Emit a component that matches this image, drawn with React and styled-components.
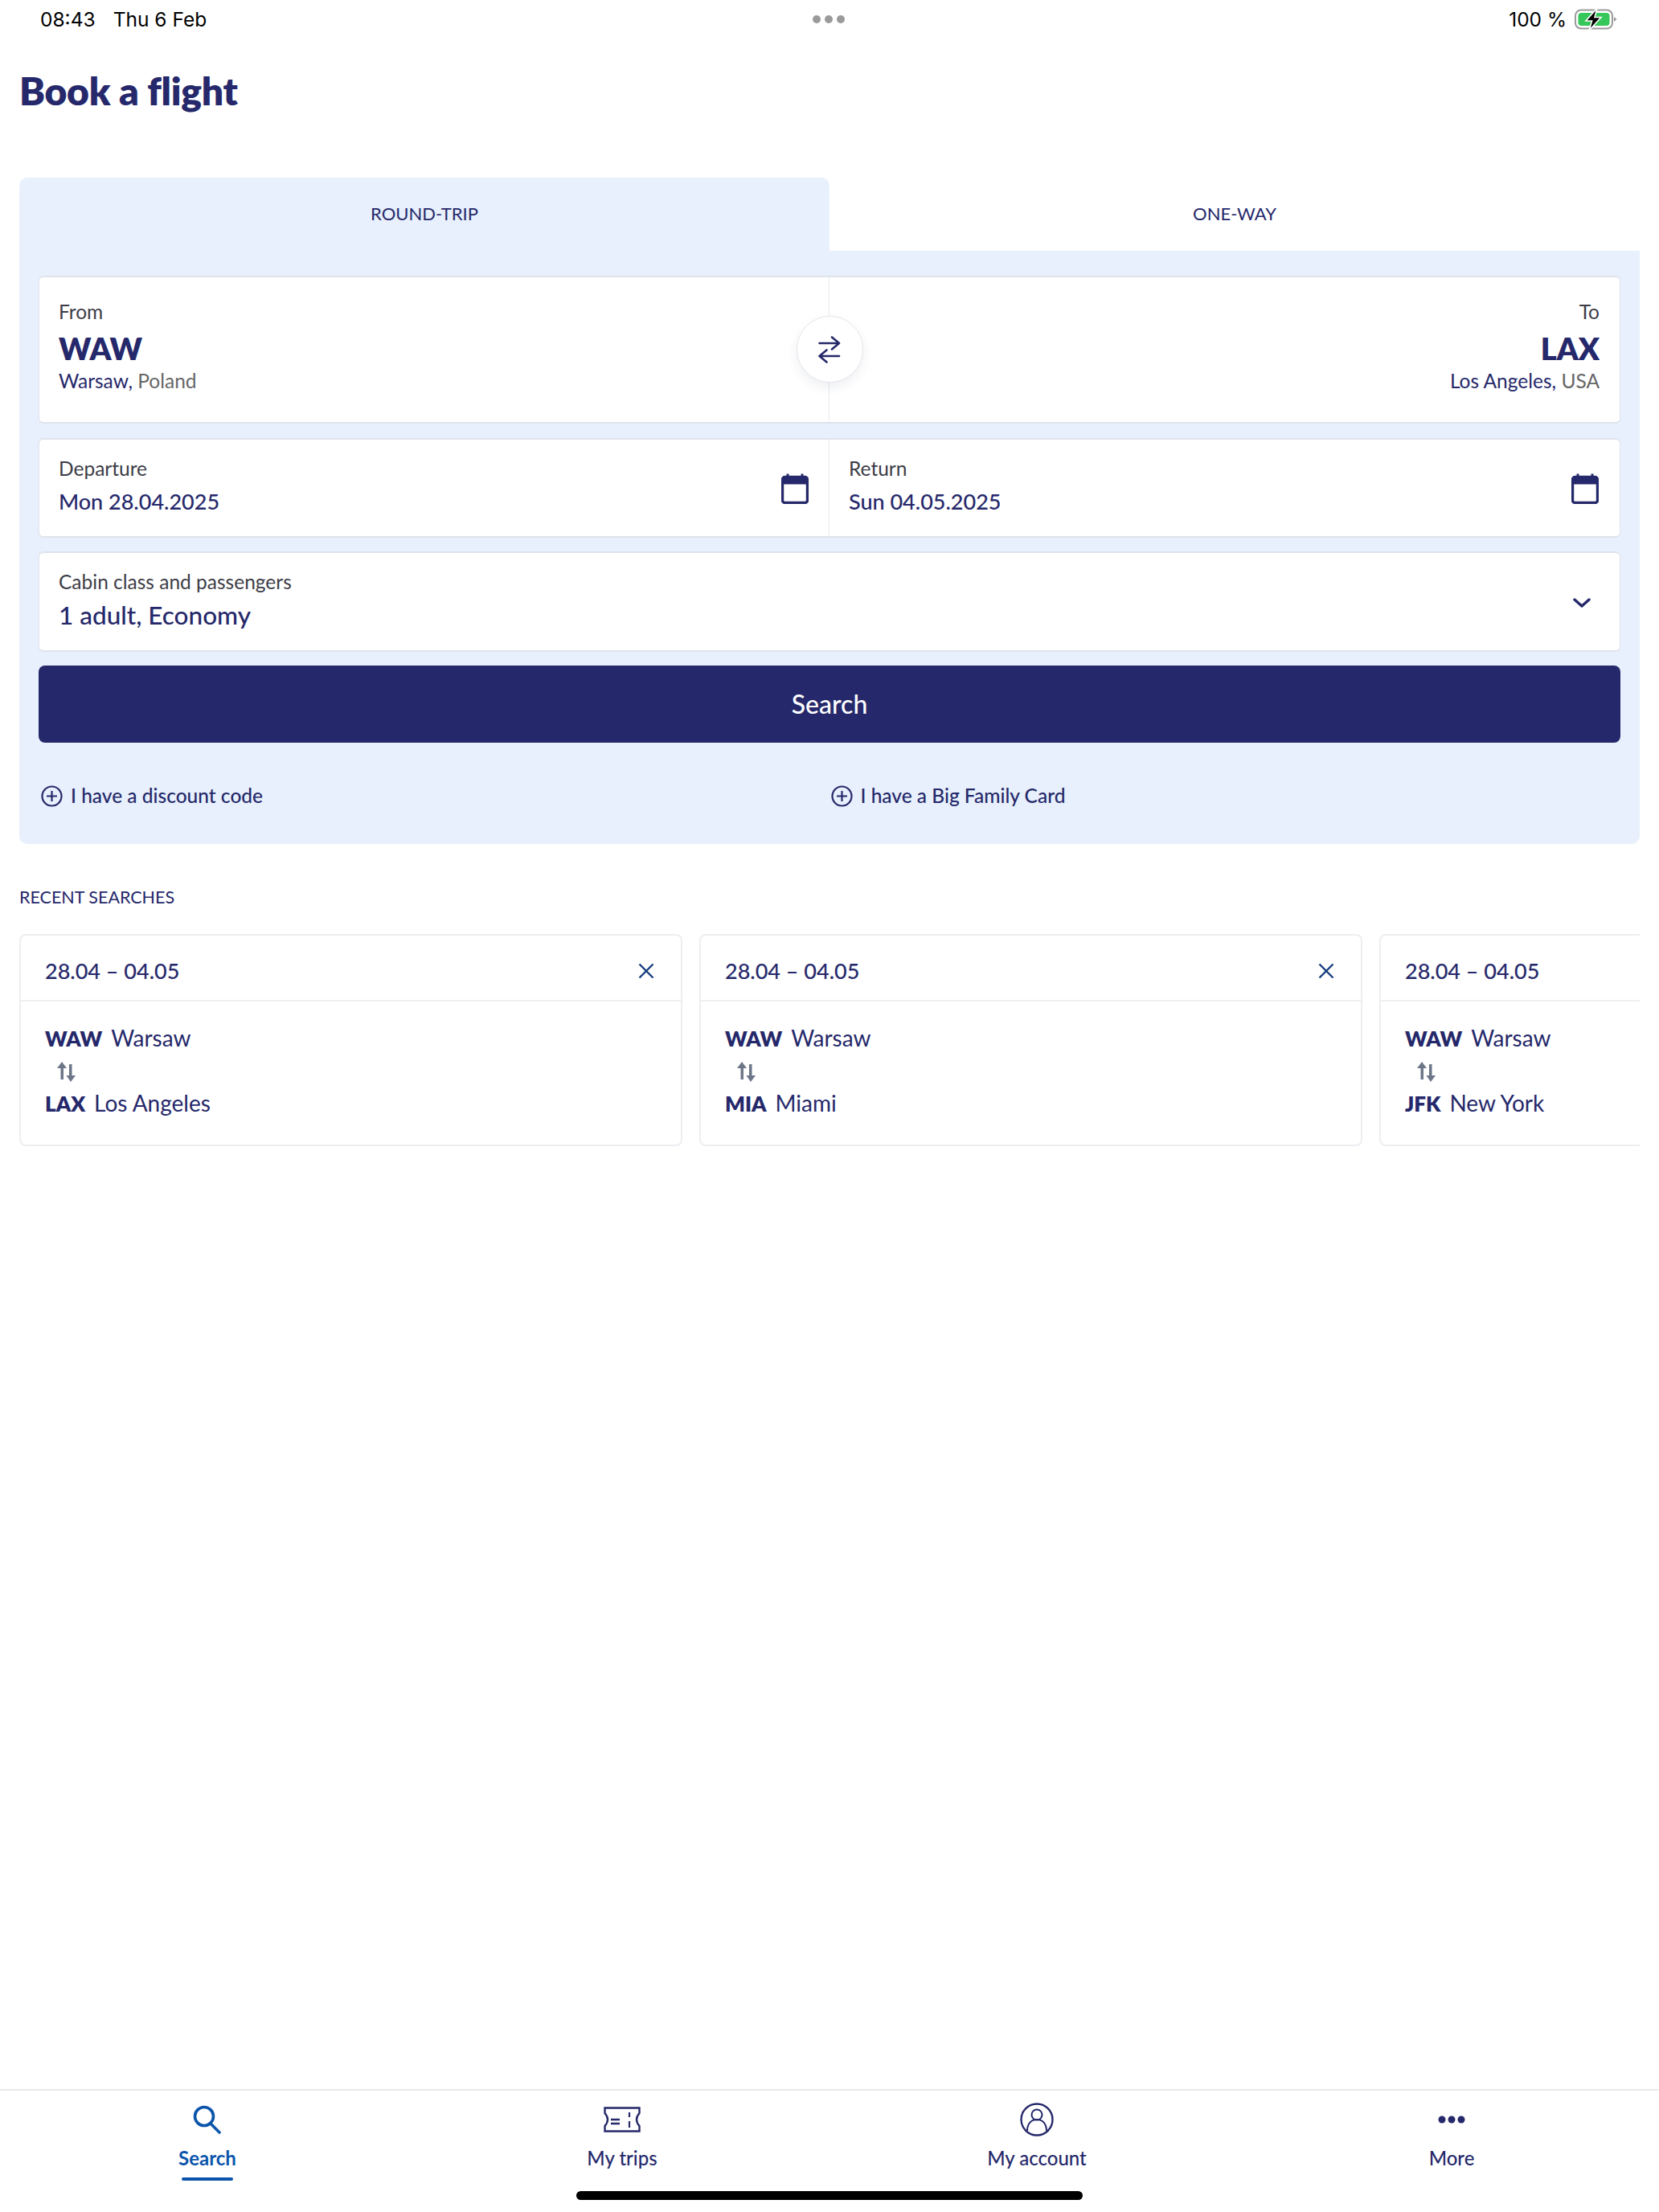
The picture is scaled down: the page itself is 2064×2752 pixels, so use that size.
import React from "react";
import styled, { createGlobalStyle } from "styled-components";

const NAVY = "#25286A";
const BLUE = "#0B55AB";
const PANEL = "#E7F0FC";

const Global = createGlobalStyle`
  html, body { margin: 0; padding: 0; background: #fff; }
  * { box-sizing: border-box; }
  #root { height: 2752px; }
`;

const Page = styled.div`
  height: 2752px;
  display: flex;
  flex-direction: column;
  font-family: "Lato", "Liberation Sans", sans-serif;
  color: ${NAVY};
  overflow: hidden;
`;
const StatusBar = styled.div`
  height: 48px;
  padding: 0 52px 0 50px;
  display: grid;
  grid-template-columns: 1fr auto 1fr;
  align-items: center;
  font-family: "Inter", "Liberation Sans", sans-serif;
  font-size: 24.5px;
  color: #000;
`;
const StatusLeft = styled.div`
  display: flex;
  gap: 22px;
`;
const StatusRight = styled.div`
  display: flex;
  justify-content: flex-end;
  align-items: center;
  gap: 10px;
`;
const Dots = styled.div`
  display: flex;
  gap: 5px;
`;
const Dot = styled.span`
  width: 10px;
  height: 10px;
  border-radius: 50%;
  background: #9a9a9a;
`;
const Main = styled.main`
  flex: 1;
  min-height: 0;
`;
const Title = styled.h1`
  margin: 0;
  height: 173px;
  padding: 35px 24px 0;
  font-size: 48px;
  line-height: 60px;
  font-weight: 800;
  letter-spacing: -0.3px;
`;
const Booking = styled.section`
  margin: 0 24px;
`;
const Tabs = styled.div`
  display: grid;
  grid-template-columns: 1fr 1fr;
  height: 91px;
`;
const Tab = styled.div`
  display: flex;
  align-items: center;
  justify-content: center;
  font-size: 22px;
  background: ${(p) => (p.$active ? PANEL : "#fff")};
  border-radius: 10px 10px 0 0;
  padding-bottom: 2px;
`;
const Panel = styled.div`
  background: ${PANEL};
  border-radius: 0 0 10px 10px;
  height: 738px;
  padding: 31px 24px 0;
  display: flex;
  flex-direction: column;
`;
const Card = styled.div`
  background: #fff;
  border: 1px solid #DFE3EB;
  border-top-width: 2px;
  border-bottom-width: 2px;
  border-radius: 6px;
  height: ${(p) => p.$h}px;
  margin-bottom: ${(p) => p.$mb}px;
  display: grid;
  grid-template-columns: ${(p) => (p.$split ? "1fr 1fr" : "1fr")};
  position: relative;
`;
const Airport = styled.div`
  padding: 25px 25px 0 24px;
  text-align: ${(p) => (p.$right ? "right" : "left")};
  ${(p) => (p.$right ? "" : "border-right: 1px solid #E8EAEE;")}
`;
const Label = styled.div`
  font-size: 24.5px;
  line-height: 36px;
  color: #3c3c46;
`;
const Code = styled.div`
  font-size: 38px;
  line-height: 50px;
  font-weight: 800;
  margin-top: 2px;
`;
const Place = styled.div`
  font-size: 24.5px;
  line-height: 32px;
  font-weight: 400;
`;
const Country = styled.span`
  color: #666;
`;
const SwapButton = styled.div`
  position: absolute;
  left: 50%;
  top: 48px;
  width: 83px;
  height: 83px;
  margin-left: -41.5px;
  border-radius: 50%;
  background: #fff;
  border: 1px solid #E6E7EC;
  box-shadow: 0 6px 14px rgba(40, 50, 90, 0.08);
  display: flex;
  align-items: center;
  justify-content: center;
`;
const Field = styled.div`
  display: flex;
  justify-content: space-between;
  align-items: flex-start;
  padding: 18px 24px 0 24px;
  ${(p) => (p.$divided ? "border-right: 1px solid #E8EAEE;" : "")}
`;
const FieldValue = styled.div`
  font-size: ${(p) => p.$size}px;
  line-height: 40px;
  margin-top: 3px;
  font-weight: 500;
`;
const IconSlot = styled.div`
  margin-top: ${(p) => p.$top}px;
  margin-right: ${(p) => p.$right}px;
  line-height: 0;
`;
const SearchButton = styled.button`
  height: 96px;
  border: none;
  border-radius: 8px;
  background: ${NAVY};
  color: #fff;
  font-family: inherit;
  font-size: 32px;
  font-weight: 500;
  padding: 0 0 2px;
`;
const Extras = styled.div`
  display: grid;
  grid-template-columns: 1fr 1fr;
  margin-top: 50px;
  padding-left: 3px;
`;
const Extra = styled.div`
  display: flex;
  align-items: center;
  gap: 10px;
  font-size: 24.5px;
  font-weight: 500;
  line-height: 32px;
`;
const SectionTitle = styled.h2`
  margin: 50px 24px 0;
  font-size: 21.5px;
  line-height: 32px;
  font-weight: 400;
`;
const CardRow = styled.div`
  margin: 30px 24px 0;
  display: flex;
  gap: 21px;
  overflow: hidden;
`;
const Recent = styled.article`
  flex: 0 0 825px;
  height: 264px;
  border: 2px solid #EDEEF1;
  border-radius: 8px;
`;
const RecentHead = styled.div`
  height: 82px;
  padding: 7px 33px 0 30px;
  border-bottom: 2px solid #EFF0F2;
  display: flex;
  align-items: center;
  justify-content: space-between;
  font-size: 27px;
  font-weight: 500;
`;
const RecentBody = styled.div`
  padding: 27px 30px 0;
  display: flex;
  flex-direction: column;
`;
const RouteLine = styled.div`
  font-size: 28px;
  line-height: 36px;
  font-weight: 400;
`;
const RouteCode = styled.strong`
  font-size: 26px;
  font-weight: 800;
  margin-right: 11px;
`;
const RouteArrows = styled.div`
  height: 44px;
  padding: 11px 0 0 14px;
  line-height: 0;
`;
const Footer = styled.footer`
  flex: none;
`;
const TabBar = styled.nav`
  height: 127px;
  border-top: 2px solid #EAEAEA;
  display: grid;
  grid-template-columns: repeat(4, 1fr);
`;
const TabItem = styled.div`
  display: flex;
  flex-direction: column;
  align-items: center;
  color: ${(p) => (p.$active ? BLUE : NAVY)};
  font-size: 24px;
  font-weight: ${(p) => (p.$active ? 700 : 500)};
`;
const TabIcon = styled.div`
  height: 60px;
  margin-top: 6px;
  display: flex;
  align-items: center;
  justify-content: center;
`;
const TabLabel = styled.div`
  line-height: 30px;
  margin-top: 3px;
`;
const TabMark = styled.div`
  width: 64px;
  height: 4px;
  margin-top: 9px;
  border-radius: 2px;
  background: ${(p) => (p.$active ? BLUE : "transparent")};
`;
const HomeZone = styled.div`
  height: 26px;
  display: flex;
  justify-content: center;
`;
const HomeBar = styled.div`
  width: 630px;
  height: 11px;
  border-radius: 6px;
  background: #000;
`;

const Battery = () => (
  <svg width="53" height="26" viewBox="0 0 53 26">
    <rect x="1" y="1.5" width="46" height="23" rx="7" fill="none" stroke="#9a9a9a" strokeWidth="2" />
    <rect x="4.5" y="5" width="39" height="16" rx="4" fill="#35C759" />
    <path d="M49 10 L52.5 13 L49 16 Z" fill="#9a9a9a" />
    <path d="M28 -1 L14 15 H21.5 L18 27 L33 10.5 H25 Z" fill="#000" stroke="#fff" strokeWidth="1.6" />
  </svg>
);
const SwapIcon = () => (
  <svg width="28" height="34" viewBox="0 0 28 34" fill="none" stroke={NAVY} strokeWidth="2.6" strokeLinecap="round" strokeLinejoin="round">
    <path d="M1.5 9 H26 M17 1.5 L26 9 L17 16.5" />
    <path d="M26 25 H1.5 M10.5 17.5 L1.5 25 L10.5 32.5" />
  </svg>
);
const CalendarIcon = () => (
  <svg width="34" height="38" viewBox="0 0 34 38">
    <path d="M8 0.5 V5 M26 0.5 V5" stroke={NAVY} strokeWidth="3" />
    <rect x="1.5" y="4.5" width="31" height="32" rx="3" fill="none" stroke={NAVY} strokeWidth="3.4" />
    <rect x="1.5" y="4.5" width="31" height="9" fill={NAVY} />
  </svg>
);
const ChevronIcon = () => (
  <svg width="22" height="14" viewBox="0 0 22 14" fill="none" stroke={NAVY} strokeWidth="3.4" strokeLinecap="round" strokeLinejoin="round">
    <path d="M2 3 L11 11 L20 3" />
  </svg>
);
const PlusCircle = () => (
  <svg width="27" height="27" viewBox="0 0 27 27" fill="none" stroke={NAVY} strokeWidth="2.2">
    <circle cx="13.5" cy="13.5" r="12" />
    <path d="M13.5 7 V20 M7 13.5 H20" />
  </svg>
);
const CloseIcon = () => (
  <svg width="20" height="20" viewBox="0 0 20 20" fill="none" stroke="#143C7C" strokeWidth="2.4">
    <path d="M1.5 1.5 L18.5 18.5 M18.5 1.5 L1.5 18.5" />
  </svg>
);
const UpDown = () => (
  <svg width="25" height="25" viewBox="0 0 25 25" fill="#6B7688">
    <path d="M7 0 L13 8 H9 V22 H5.5 V8 H1 Z" />
    <path d="M16 3 H19.5 V17 H24 L18 25 L12.5 17 H16 Z" />
  </svg>
);
const SearchIcon = () => (
  <svg width="36" height="36" viewBox="0 0 36 36" fill="none" stroke={BLUE} strokeWidth="3.6" strokeLinecap="round">
    <circle cx="14" cy="14" r="11.5" />
    <path d="M22 23 L33 34" />
  </svg>
);
const TicketIcon = () => (
  <svg width="46" height="32" viewBox="0 0 46 32" fill="none" stroke={NAVY} strokeWidth="2.4">
    <path d="M1.5 1.5 H44.5 V8 Q41 12 41 16 Q41 20 44.5 24 V30.5 H1.5 V24 Q5 20 5 16 Q5 12 1.5 8 Z" />
    <path d="M9 16 H20 M9 21 H20" strokeWidth="2.6" />
    <path d="M32 7 V13 M32 18 V26" strokeWidth="2.2" />
  </svg>
);
const AccountIcon = () => (
  <svg width="42" height="42" viewBox="0 0 42 42" fill="none" stroke={NAVY} strokeWidth="2.4">
    <circle cx="21" cy="21" r="19.5" />
    <circle cx="21" cy="15" r="6.5" strokeWidth="2" />
    <path d="M9 35 C9 26 14 21 21 21 C28 21 33 26 33 35" strokeWidth="2" />
  </svg>
);
const MoreIcon = () => (
  <svg width="34" height="10" viewBox="0 0 34 10" fill={NAVY}>
    <circle cx="5" cy="5" r="4.5" />
    <circle cx="17" cy="5" r="4.5" />
    <circle cx="29" cy="5" r="4.5" />
  </svg>
);

const searches = [
  { code: "LAX", city: "Los Angeles" },
  { code: "MIA", city: "Miami" },
  { code: "JFK", city: "New York" },
];
const navItems = [
  { label: "Search", icon: <SearchIcon />, active: true },
  { label: "My trips", icon: <TicketIcon /> },
  { label: "My account", icon: <AccountIcon /> },
  { label: "More", icon: <MoreIcon /> },
];

export default function App() {
  return (
    <Page>
      <Global />
      <StatusBar>
        <StatusLeft>
          <span>08:43</span>
          <span>Thu 6 Feb</span>
        </StatusLeft>
        <Dots>
          <Dot />
          <Dot />
          <Dot />
        </Dots>
        <StatusRight>
          <span>100 %</span>
          <Battery />
        </StatusRight>
      </StatusBar>
      <Main>
        <Title>Book a flight</Title>
        <Booking>
          <Tabs>
            <Tab $active>ROUND-TRIP</Tab>
            <Tab>ONE-WAY</Tab>
          </Tabs>
          <Panel>
            <Card $h={184} $mb={18} $split>
              <Airport>
                <Label>From</Label>
                <Code>WAW</Code>
                <Place>
                  Warsaw, <Country>Poland</Country>
                </Place>
              </Airport>
              <Airport $right>
                <Label>To</Label>
                <Code>LAX</Code>
                <Place>
                  Los Angeles, <Country>USA</Country>
                </Place>
              </Airport>
              <SwapButton>
                <SwapIcon />
              </SwapButton>
            </Card>
            <Card $h={124} $mb={17} $split>
              <Field $divided>
                <div>
                  <Label>Departure</Label>
                  <FieldValue $size={27}>Mon 28.04.2025</FieldValue>
                </div>
                <IconSlot $top={24} $right={1}>
                  <CalendarIcon />
                </IconSlot>
              </Field>
              <Field>
                <div>
                  <Label>Return</Label>
                  <FieldValue $size={27}>Sun 04.05.2025</FieldValue>
                </div>
                <IconSlot $top={24} $right={2}>
                  <CalendarIcon />
                </IconSlot>
              </Field>
            </Card>
            <Card $h={125} $mb={17}>
              <Field>
                <div>
                  <Label>Cabin class and passengers</Label>
                  <FieldValue $size={31.5}>1 adult, Economy</FieldValue>
                </div>
                <IconSlot $top={37} $right={12}>
                  <ChevronIcon />
                </IconSlot>
              </Field>
            </Card>
            <SearchButton>Search</SearchButton>
            <Extras>
              <Extra>
                <PlusCircle />I have a discount code
              </Extra>
              <Extra>
                <PlusCircle />I have a Big Family Card
              </Extra>
            </Extras>
          </Panel>
        </Booking>
        <SectionTitle>RECENT SEARCHES</SectionTitle>
        <CardRow>
          {searches.map((s) => (
            <Recent key={s.code}>
              <RecentHead>
                <span>28.04 – 04.05</span>
                <CloseIcon />
              </RecentHead>
              <RecentBody>
                <RouteLine>
                  <RouteCode>WAW</RouteCode>Warsaw
                </RouteLine>
                <RouteArrows>
                  <UpDown />
                </RouteArrows>
                <RouteLine>
                  <RouteCode>{s.code}</RouteCode>
                  {s.city}
                </RouteLine>
              </RecentBody>
            </Recent>
          ))}
        </CardRow>
      </Main>
      <Footer>
        <TabBar>
          {navItems.map((n) => (
            <TabItem key={n.label} $active={n.active}>
              <TabIcon>{n.icon}</TabIcon>
              <TabLabel>{n.label}</TabLabel>
              <TabMark $active={n.active} />
            </TabItem>
          ))}
        </TabBar>
        <HomeZone>
          <HomeBar />
        </HomeZone>
      </Footer>
    </Page>
  );
}
